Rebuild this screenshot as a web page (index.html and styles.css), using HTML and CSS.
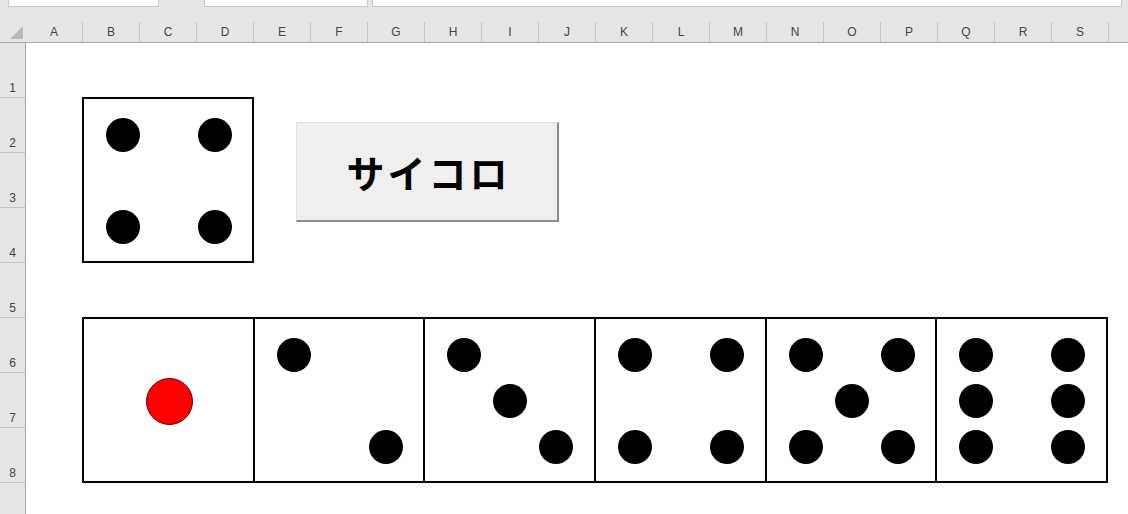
FILE: index.html
```html
<!DOCTYPE html>
<html lang="ja">
<head>
<meta charset="utf-8">
<title>サイコロ</title>
<link rel="stylesheet" href="styles.css">
</head>
<body>
<div class="app">
  <div class="toolbar">
    <div class="box namebox"></div>
    <div class="box fxbox"></div>
    <div class="box formula"></div>
  </div>
  <div class="colheads">
    <div class="corner"><span class="tri"></span></div>
    <div class="ch">A</div><div class="ch">B</div><div class="ch">C</div><div class="ch">D</div>
    <div class="ch">E</div><div class="ch">F</div><div class="ch">G</div><div class="ch">H</div>
    <div class="ch">I</div><div class="ch">J</div><div class="ch">K</div><div class="ch">L</div>
    <div class="ch">M</div><div class="ch">N</div><div class="ch">O</div><div class="ch">P</div>
    <div class="ch">Q</div><div class="ch">R</div><div class="ch">S</div><div class="ch"></div>
  </div>
  <div class="main">
    <div class="rowheads">
      <div class="rh">1</div><div class="rh">2</div><div class="rh">3</div><div class="rh">4</div>
      <div class="rh">5</div><div class="rh">6</div><div class="rh">7</div><div class="rh">8</div>
      <div class="rh"></div>
    </div>
    <div class="sheet">
      <div class="face big">
        <span class="pip p-tl"></span><span class="pip p-tr"></span>
        <span class="pip p-bl"></span><span class="pip p-br"></span>
      </div>
      <button class="btn">サイコロ</button>
      <div class="strip">
        <div class="face sdie">
          <span class="pip red p-c"></span>
        </div>
        <div class="face sdie">
          <span class="pip p-tl"></span><span class="pip p-br"></span>
        </div>
        <div class="face sdie">
          <span class="pip p-tl"></span><span class="pip p-c"></span><span class="pip p-br"></span>
        </div>
        <div class="face sdie">
          <span class="pip p-tl"></span><span class="pip p-tr"></span>
          <span class="pip p-bl"></span><span class="pip p-br"></span>
        </div>
        <div class="face sdie">
          <span class="pip p-tl"></span><span class="pip p-tr"></span><span class="pip p-c"></span>
          <span class="pip p-bl"></span><span class="pip p-br"></span>
        </div>
        <div class="face sdie">
          <span class="pip p-tl"></span><span class="pip p-tr"></span>
          <span class="pip p-ml"></span><span class="pip p-mr"></span>
          <span class="pip p-bl"></span><span class="pip p-br"></span>
        </div>
      </div>
    </div>
  </div>
</div>
</body>
</html>
```
FILE: styles.css
```css
* { box-sizing: border-box; }
html, body { margin: 0; padding: 0; }
body {
  font-family: "Liberation Sans", Arial, sans-serif;
  background: #ffffff;
}
.app {
  width: 1128px;
  height: 514px;
  overflow: hidden;
  display: flex;
  flex-direction: column;
}
.toolbar {
  height: 22px;
  flex: none;
  display: flex;
  align-items: flex-start;
  background: #e6e6e6;
}
.box {
  height: 7px;
  background: #ffffff;
  border: 1px solid #c6c6c6;
  border-top: none;
}
.namebox { margin-left: 8px; width: 151px; }
.fxbox { margin-left: 45px; width: 164px; }
.formula { margin-left: 4px; flex: 1; margin-right: 6px; }

.colheads {
  height: 21px;
  flex: none;
  display: flex;
  background: #e6e6e6;
  border-bottom: 1px solid #a9a9a9;
}
.corner {
  width: 26px;
  flex: none;
  display: flex;
  align-items: flex-end;
  justify-content: flex-end;
  padding: 0 3px 3px 0;
}
.tri {
  width: 13px;
  height: 13px;
  background: #b8b8b8;
  clip-path: polygon(100% 0, 100% 100%, 0 100%);
}
.ch {
  width: 57px;
  flex: none;
  border-right: 1px solid #c4c4c4;
  font-size: 12px;
  line-height: 20px;
  color: #444444;
  text-align: center;
}

.main {
  flex: 1;
  display: flex;
  min-height: 0;
}
.rowheads {
  width: 26px;
  flex: none;
  background: #e6e6e6;
  border-right: 1px solid #a9a9a9;
}
.rh {
  height: 55px;
  border-bottom: 1px solid #c4c4c4;
  display: flex;
  align-items: flex-end;
  justify-content: center;
  padding-bottom: 2px;
  font-size: 12px;
  line-height: 14px;
  color: #444444;
}

.sheet {
  flex: 1;
  display: grid;
  grid-template-columns: 56px repeat(19, 57px);
  grid-template-rows: 54px repeat(9, 55px);
  background: #ffffff;
}

.face {
  display: grid;
  grid-template-columns: repeat(3, 46px);
  grid-template-rows: repeat(3, 46px);
  padding: 13px 0 0 16px;
  background: #ffffff;
}
.big {
  grid-column: 2 / 5;
  grid-row: 2 / 5;
  width: 172px;
  height: 166px;
  border: 2px solid #000000;
}
.strip {
  grid-column: 2 / 20;
  grid-row: 6 / 9;
  height: 166px;
  display: grid;
  grid-template-columns: repeat(6, 1fr);
  border-left: 2px solid #000000;
}
.sdie {
  border-top: 2px solid #000000;
  border-bottom: 2px solid #000000;
  border-right: 2px solid #000000;
}

.pip {
  width: 34px;
  height: 34px;
  border-radius: 50%;
  background: #000000;
  place-self: center;
}
.pip.red {
  width: 47px;
  height: 47px;
  background: #ff0000;
  border: 1px solid #5c0000;
}
.p-tl { grid-area: 1 / 1; }
.p-tr { grid-area: 1 / 3; }
.p-ml { grid-area: 2 / 1; }
.p-c  { grid-area: 2 / 2; }
.p-mr { grid-area: 2 / 3; }
.p-bl { grid-area: 3 / 1; }
.p-br { grid-area: 3 / 3; }

.btn {
  grid-column: 5 / 11;
  grid-row: 2 / 5;
  align-self: start;
  justify-self: start;
  margin: 25px 0 0 43px;
  width: 263px;
  height: 100px;
  padding: 0 0 0 3px;
  background: #efefef;
  border: 1px solid #e2e2e2;
  border-right: 2px solid #8c8c8c;
  border-bottom: 2px solid #8c8c8c;
  font-family: "Noto Sans CJK JP", "Noto Sans CJK SC", sans-serif;
  font-weight: bold;
  font-size: 38px;
  color: #000000;
  letter-spacing: 3px;
}
```
